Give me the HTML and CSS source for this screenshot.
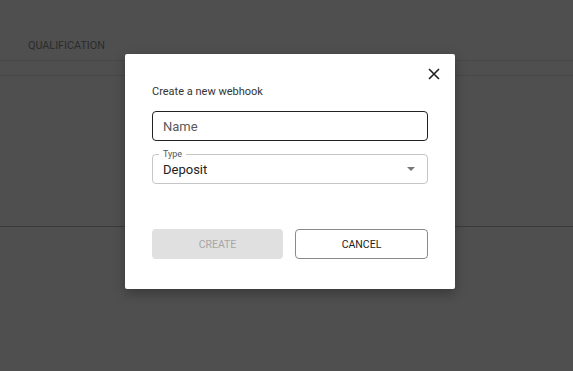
FILE: index.html
```html
<!DOCTYPE html>
<html>
<head>
<meta charset="utf-8">
<link rel="stylesheet" href="styles.css">
</head>
<body>
<div class="page">
  <div class="tabs">
    <div class="tab">QUALIFICATION</div>
  </div>
  <div class="subbar"></div>
  <div class="content"></div>
</div>
<div class="overlay">
  <div class="dialog">
    <button class="close" aria-label="Close">
      <svg width="12" height="12" viewBox="0 0 12 12"><path d="M1 1L11 11M11 1L1 11" stroke="#1f1f1f" stroke-width="1.6" fill="none"/></svg>
    </button>
    <div class="title">Create a new webhook</div>
    <div class="field field-name"><span class="placeholder">Name</span></div>
    <div class="field field-type">
      <span class="legend">Type</span>
      <span class="value">Deposit</span>
      <span class="arrow"></span>
    </div>
    <div class="actions">
      <button class="btn btn-create">CREATE</button>
      <button class="btn btn-cancel">CANCEL</button>
    </div>
  </div>
</div>
</body>
</html>
```

FILE: styles.css
```css
html, body {
  margin: 0;
  padding: 0;
  height: 100%;
}
body {
  background: #4f4f4f;
  font-family: Roboto, "Liberation Sans", Arial, sans-serif;
  overflow: hidden;
}
.page {
  display: flex;
  flex-direction: column;
}
.tabs {
  height: 61px;
  border-bottom: 1px solid #474747;
  display: flex;
  align-items: flex-end;
  box-sizing: border-box;
}
.tab {
  font-size: 10.8px;
  color: #2b2b2b;
  padding: 0 0 8px 28px;
}
.subbar {
  height: 14px;
  border-bottom: 1px solid #474747;
}
.content {
  height: 150px;
  border-bottom: 1px solid #3a3a3a;
}
.overlay {
  position: absolute;
  inset: 0;
  display: flex;
  align-items: flex-start;
  padding: 54px 0 0 125px;
}
.dialog {
  position: relative;
  width: 330px;
  height: 235px;
  box-sizing: border-box;
  background: #fff;
  border-radius: 2px;
  box-shadow: 0 4px 12px rgba(0,0,0,0.3);
  padding: 31px 27px 0 27px;
  display: flex;
  flex-direction: column;
}
.close {
  position: absolute;
  top: 14px;
  right: 15px;
  width: 12px;
  height: 12px;
  padding: 0;
  border: 0;
  background: none;
  display: flex;
}
.title {
  font-size: 11px;
  color: #333;
  line-height: 13px;
  margin-bottom: 13px;
}
.field {
  position: relative;
  height: 30px;
  box-sizing: border-box;
  border-radius: 4px;
  display: flex;
  align-items: center;
  padding: 0 10px;
  font-size: 13px;
}
.field-name {
  border: 1px solid #222;
  color: #5a5a5a;
}
.field-type {
  margin-top: 13px;
  border: 1px solid #c6c6c6;
  color: #222;
}
.legend {
  position: absolute;
  top: -7px;
  left: 6px;
  background: #fff;
  padding: 0 4px;
  font-size: 9px;
  line-height: 12px;
  color: #555;
}
.value {
  flex: 1;
}
.arrow {
  width: 0;
  height: 0;
  border-left: 4px solid transparent;
  border-right: 4px solid transparent;
  border-top: 4px solid #777;
  margin-right: 2px;
}
.actions {
  margin-top: 45px;
  display: flex;
  gap: 12px;
}
.btn {
  flex: 1;
  height: 30px;
  box-sizing: border-box;
  border-radius: 4px;
  font-family: inherit;
  font-size: 10.5px;
  padding: 0;
}
.btn-create {
  background: #e0e0e0;
  border: 0;
  color: #a6a6a6;
}
.btn-cancel {
  background: #fff;
  border: 1px solid #8a8a8a;
  color: #222;
}
```
